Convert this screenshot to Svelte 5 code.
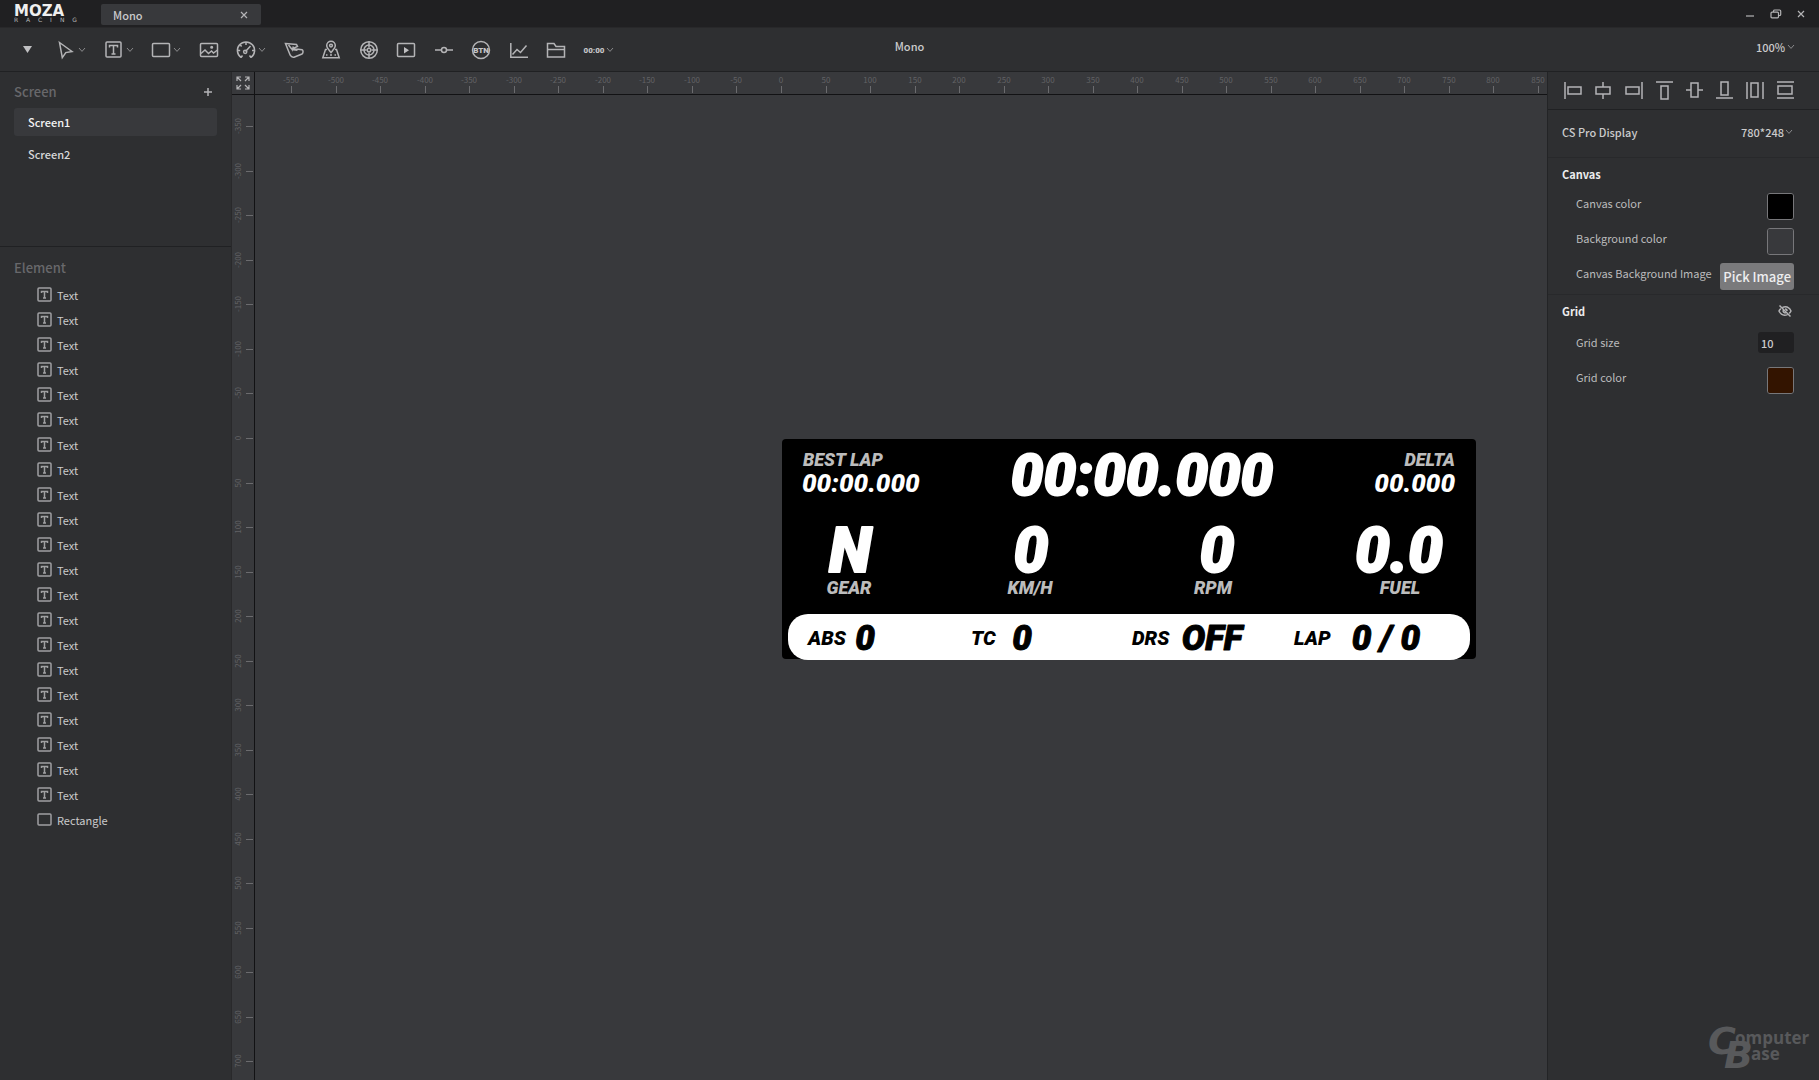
<script>
  const tools = [
    { id: 'cursor', label: 'Select', menu: true },
    { id: 'text', label: 'Text', menu: true },
    { id: 'rect', label: 'Shape', menu: true },
    { id: 'image', label: 'Image' },
    { id: 'gauge', label: 'Gauge', menu: true },
    { id: 'needle', label: 'Pointer' },
    { id: 'map', label: 'Track map' },
    { id: 'radar', label: 'Radar' },
    { id: 'play', label: 'Video' },
    { id: 'slider', label: 'Slider' },
    { id: 'btn', label: 'Button' },
    { id: 'chart', label: 'Chart' },
    { id: 'folder', label: 'Folder' },
    { id: 'time', label: 'Timer', menu: true }
  ];

  const aligns = [
    { label: 'Align left', d: 'M1 1v17 M4 6h13v7h-13z' },
    { label: 'Align center', d: 'M9 1v5 M9 13v5 M2 6h14v7h-14z' },
    { label: 'Align right', d: 'M17 1v17 M1 6h13v7h-13z' },
    { label: 'Align top', d: 'M1 1h17 M6 5h7v13h-7z' },
    { label: 'Align middle', d: 'M1 9h5 M13 9h5 M6 2h7v14h-7z' },
    { label: 'Align bottom', d: 'M1 17h17 M6 1h7v13h-7z' },
    { label: 'Distribute horizontally', d: 'M1 1v17 M17 1v17 M5 2h7v14h-7z' },
    { label: 'Distribute vertically', d: 'M1 1h17 M1 17h17 M2 5h14v8h-14z' }
  ];

  const screens = ['Screen1', 'Screen2'];
  const elements = [...Array(21).fill('Text'), 'Rectangle'];

  // ruler marks: one every 50 units at the current zoom, as far as the rulers reach
  const unit = 0.8905;
  const originX = 526;
  const originY = 343;
  let topWidth = $state(0);
  let sideHeight = $state(0);
  function marks(from, origin, length) {
    const out = [];
    for (let v = from; origin + v * unit < length - 8; v += 50) {
      out.push({ v, at: Math.round(origin + v * unit) });
    }
    return out;
  }
  const across = $derived(marks(-550, originX, topWidth));
  const down = $derived(marks(-350, originY, sideHeight));

  const items = [
    { t: 'BEST LAP', x: 21, y: 27, c: 'caption' },
    { t: '00:00.000', x: 20, y: 53, c: 'small' },
    { t: '00:00.000', x: 360, y: 56, c: 'big mid' },
    { t: 'DELTA', x: 673, y: 27, c: 'caption end' },
    { t: '00.000', x: 673, y: 53, c: 'small end' },
    { t: 'N', x: 68, y: 133, c: 'huge mid' },
    { t: 'GEAR', x: 67, y: 155, c: 'caption mid' },
    { t: '0', x: 249, y: 133, c: 'huge mid' },
    { t: 'KM/H', x: 248, y: 155, c: 'caption mid' },
    { t: '0', x: 435, y: 133, c: 'huge mid' },
    { t: 'RPM', x: 431, y: 155, c: 'caption mid' },
    { t: '0.0', x: 617, y: 133, c: 'huge mid' },
    { t: 'FUEL', x: 618, y: 155, c: 'caption mid' },
    { t: 'ABS', x: 26, y: 206, c: 'tag' },
    { t: '0', x: 83, y: 211, c: 'value mid' },
    { t: 'TC', x: 189, y: 206, c: 'tag' },
    { t: '0', x: 240, y: 211, c: 'value mid' },
    { t: 'DRS', x: 350, y: 206, c: 'tag' },
    { t: 'OFF', x: 430, y: 211, c: 'value mid' },
    { t: 'LAP', x: 512, y: 206, c: 'tag' },
    { t: '0 / 0', x: 604, y: 211, c: 'value mid' }
  ];
</script>

{#snippet chevron()}
  <svg class="chev" width="8" height="6" viewBox="0 0 8 6" aria-hidden="true"><path d="M1 1l3 3.4L7 1" /></svg>
{/snippet}

{#snippet glyph(id)}
  <svg width="20" height="20" viewBox="0 0 20 20" aria-hidden="true">
    {#if id === 'cursor'}
      <path d="M3.5 2.5l12.5 9-6.2 1.1-3.5 5z" />
    {:else if id === 'text'}
      <rect x="2" y="2" width="15" height="15" rx="1" /><path d="M5.500 7.500V5.500h8v2M9.500 5.500v8.500M7.500 14h4" />
    {:else if id === 'rect'}
      <rect x="1.5" y="3.5" width="17" height="13" rx="1" />
    {:else if id === 'image'}
      <rect x="1.5" y="3.5" width="17" height="13" rx="1" />
      <path d="M2 13.5l4-3.5 3.5 3.5 3-2.5 2 2 4-3" /><circle cx="12.7" cy="7.2" r="0.800" />
    {:else if id === 'gauge'}
      <path d="M5 17.5a8.6 8.6 0 1 1 10 0M9.5 11.5l5-5.5M10 2v3M4 4.5l1.6 2M1.5 10.5h2.7M16 10.5h2.5M5 17.5l1.5-2M15 17.5l-1.5-2" />
      <circle cx="9.2" cy="11.8" r="1.6" />
    {:else if id === 'needle'}
      <path d="M1.5 3.5L12.5 4.5l1 2L9 8.5l9 1.2c1.5.8 1.3 3.5 0 4.3l-8 3.2c-2 .4-3-.6-3.8-2z M4.5 5l4 5 .8-3.5M7.5 9.5l6 .8" />
    {:else if id === 'map'}
      <path d="M10 12.5c-2.5-3-4.3-4.7-4.3-7a4.3 4.3 0 0 1 8.6 0c0 2.3-1.8 4-4.3 7z" />
      <circle cx="10" cy="5.6" r="1.4" />
      <path d="M6 9.5H4.5L1.8 17.8h16.4L15.5 9.5H14M5 15h1.5M9 15h2M13.500 15h1.500" />
    {:else if id === 'radar'}
      <circle cx="10" cy="10" r="8.3" /><circle cx="10" cy="10" r="5" /><circle cx="10" cy="10" r="1.800" />
      <path d="M10 1.500v6M10 12.500v6M1.500 10h6M12.500 10h6" />
    {:else if id === 'play'}
      <rect x="1.500" y="3.500" width="17" height="13" rx="1" /><path class="fill" d="M8 7l5 3.200-5 3.200z" />
    {:else if id === 'slider'}
      <path d="M1 10h6.500M12.500 10H19" /><circle cx="10" cy="10" r="2.500" />
    {:else if id === 'btn'}
      <circle cx="10" cy="10" r="8.500" /><text x="10" y="13" class="mark">BTN</text>
    {:else if id === 'chart'}
      <path d="M1.800 3v14.200H19M3.500 14.500l4.500-5 3.500 3 6-7" />
    {:else if id === 'folder'}
      <path d="M1.500 17V3.500h6.500l2 3h8.500V17zM1.500 9.500h17" />
    {:else if id === 'time'}
      <text x="10" y="13" class="mark">00:00</text>
    {/if}
  </svg>
{/snippet}

<div class="app">
  <header class="titlebar">
    <div class="logo"><span class="moza">MOZA</span><span class="racing">RACING</span></div>
    <div class="tab">
      <span>Mono</span>
      <button aria-label="Close tab"><svg width="8" height="8" viewBox="0 0 8 8"><path d="M1 1l6 6M7 1L1 7" /></svg></button>
    </div>
    <div class="window-buttons">
      <button aria-label="Minimize"><svg width="10" height="10" viewBox="0 0 10 10"><path d="M1 7h8" /></svg></button>
      <button aria-label="Restore">
        <svg width="12" height="10" viewBox="0 0 12 10"><path d="M1 4.200q0-1 1-1h5.500q1 0 1 1v3.600q0 1-1 1H2q-1 0-1-1zM3.500 3V2q.2-1 1.200-1h5q1 0 1 1v3.500q0 1-1 1H8.700" /></svg>
      </button>
      <button aria-label="Close"><svg width="8" height="8" viewBox="0 0 8 8"><path d="M1 1l6 6M7 1L1 7" /></svg></button>
    </div>
  </header>

  <div class="toolbar">
    <button class="main-menu" aria-label="Menu"><svg width="9" height="7" viewBox="0 0 9 7"><path class="fill" d="M0 0h9L4.500 7z" /></svg></button>
    <nav class="tools">
      {#each tools as tool}
        <button aria-label={tool.label}>{@render glyph(tool.id)}{#if tool.menu}{@render chevron()}{/if}</button>
      {/each}
    </nav>
    <h1>Mono</h1>
    <label class="zoom">
      <select aria-label="Zoom"><option>100%</option></select>{@render chevron()}
    </label>
  </div>

  <div class="body">
    <aside class="left">
      <section class="screens">
        <div class="head">
          <h2>Screen</h2>
          <button aria-label="Add screen"><svg width="10" height="10" viewBox="0 0 10 10"><path d="M5 1v8M1 5h8" /></svg></button>
        </div>
        {#each screens as name, i}
          <button class="screen" class:active={i === 0}>{name}</button>
        {/each}
      </section>
      <section class="elements">
        <h2>Element</h2>
        <ul>
          {#each elements as name}
            <li>
              <button>
                <svg width="15" height="15" viewBox="0 0 15 15" aria-hidden="true">
                  {#if name === 'Text'}
                    <rect x="1" y="1" width="13" height="13" rx="1" /><path d="M4.500 6V4.500h6V6M7.500 4.500v6.500M6 11h3" />
                  {:else}
                    <rect x="1" y="2" width="13" height="11" rx="1" />
                  {/if}
                </svg>
                {name}
              </button>
            </li>
          {/each}
        </ul>
      </section>
    </aside>

    <main class="stage">
      <button class="corner" aria-label="Fit to view">
        <svg width="14" height="14" viewBox="0 0 14 14"><path d="M1 5V1h4M1 1l4 4M9 1h4v4M13 1L9 5M1 9v4h4M1 13l4-4M13 9v4H9M13 13L9 9" /></svg>
      </button>
      <div class="ruler top" bind:clientWidth={topWidth}>
        <svg width="100%" height="22">
          {#each across as m}
            <path d="M{m.at}.5 14v7" /><text x={m.at} y="11">{m.v}</text>
          {/each}
        </svg>
      </div>
      <div class="ruler side" bind:clientHeight={sideHeight}>
        <svg width="22" height="100%">
          {#each down as m}
            <path d="M14 {m.at}.5h7" /><text transform="translate(9 {m.at}) rotate(-90)">{m.v}</text>
          {/each}
        </svg>
      </div>
      <div class="canvas">
        <svg class="display" width="694" height="221" viewBox="0 0 694 221">
          <rect class="screen-bg" width="694" height="220" rx="4" />
          <rect class="strip" x="6" y="175" width="682" height="46" rx="20" />
          {#each items as it}
            <text class={it.c} x={it.x} y={it.y}>{it.t}</text>
          {/each}
        </svg>
      </div>
    </main>

    <aside class="right">
      <div class="aligns">
        {#each aligns as a}
          <button aria-label={a.label}><svg width="19" height="19" viewBox="0 0 19 19"><path d={a.d} /></svg></button>
        {/each}
      </div>
      <div class="device">
        <label for="size">CS Pro Display</label>
        <span class="pick"><select id="size"><option>780*248</option></select>{@render chevron()}</span>
      </div>
      <section class="group">
        <h3>Canvas</h3>
        <div class="row"><label for="canvas-color">Canvas color</label><input id="canvas-color" type="color" value="#000000" /></div>
        <div class="row"><label for="bg-color">Background color</label><input id="bg-color" type="color" value="#38393c" /></div>
        <div class="row"><label for="bg-image">Canvas Background Image</label><button id="bg-image" class="pick-image">Pick Image</button></div>
      </section>
      <section class="group">
        <div class="group-head">
          <h3>Grid</h3>
          <button aria-label="Show grid">
            <svg width="14" height="14" viewBox="0 0 14 14"><path d="M4.500 3.400C8.500 1.900 11.500 4 13 7c-.5 1-1 1.700-1.800 2.400M9.500 10.600C5.500 12.100 2.500 10 1 7c.5-1 1-1.700 1.800-2.400M5.200 6.300a2 2 0 0 0 2.500 2.500M7 5a2 2 0 0 1 2 2M1.500 1.500l11 11" /></svg>
          </button>
        </div>
        <div class="row"><label for="grid-size">Grid size</label><input id="grid-size" type="text" value="10" /></div>
        <div class="row"><label for="grid-color">Grid color</label><input id="grid-color" type="color" value="#331400" /></div>
      </section>
      <div class="watermark" aria-label="ComputerBase">
        <span class="c">C</span><span class="omputer">omputer</span><span class="b">B</span><span class="ase">ase</span>
      </div>
    </aside>
  </div>
</div>

<style>
  :global(body) {
    margin: 0;
    background: #2e2f31;
  }
  .app {
    display: flex;
    flex-direction: column;
    height: 100vh;
    overflow: hidden;
    color: #cbcbcc;
    background: #2e2f31;
    font-family: 'Noto Sans CJK SC', 'Noto Sans', sans-serif;
    font-size: 11px;
    font-weight: 500;
    line-height: 20px;
  }
  button,
  select,
  input {
    margin: 0;
    padding: 0;
    border: 0;
    background: none;
    color: inherit;
    font: inherit;
  }
  select {
    appearance: none;
  }
  button {
    display: flex;
    align-items: center;
  }
  svg {
    display: block;
    fill: none;
    stroke: #b4b4b6;
    stroke-width: 1.5;
    flex: none;
  }
  svg text {
    stroke: none;
  }
  .fill {
    fill: #c0c0c2;
    stroke: none;
  }
  h1,
  h2,
  h3 {
    margin: 0;
    font-size: 11px;
    font-weight: 500;
  }
  h2 {
    color: #68686b;
    font-size: 13px;
  }
  h3 {
    color: #ececed;
    font-weight: 700;
  }
  .chev {
    stroke: #8a8a8c;
    stroke-width: 1;
  }

  .titlebar {
    display: flex;
    flex: none;
    height: 28px;
    background: #202022;
    border-bottom: 1px solid #28282a;
    box-sizing: border-box;
  }
  .logo {
    display: flex;
    flex-direction: column;
    width: 87px;
    padding: 5px 0 0 14px;
    color: #efefef;
    font-family: 'DejaVu Sans', sans-serif;
  }
  .moza {
    font-size: 15px;
    font-weight: 700;
    line-height: 12px;
  }
  .racing {
    font-size: 6px;
    line-height: 6px;
    letter-spacing: 8px;
    color: #b8b8ba;
  }
  .tab {
    display: flex;
    align-items: center;
    justify-content: space-between;
    width: 135px;
    height: 21px;
    margin-top: 4px;
    padding: 0 13px 0 12px;
    border-radius: 2px;
    background: #38393c;
  }
  .window-buttons {
    display: flex;
    align-items: center;
    gap: 15px;
    margin-left: auto;
    padding-right: 14px;
  }
  .window-buttons svg,
  .tab svg {
    stroke-width: 1.2;
  }

  .toolbar {
    position: relative;
    display: flex;
    flex: none;
    align-items: center;
    height: 44px;
    padding: 0 24px 0 23px;
    border-bottom: 1px solid #202123;
    box-sizing: border-box;
  }
  .main-menu {
    width: 33px;
  }
  .tools {
    display: flex;
    justify-content: space-between;
    width: 558px;
  }
  .tools button {
    gap: 2px;
  }
  .tools svg {
    overflow: visible;
  }
  .mark {
    fill: #c4c4c6;
    font-family: 'Roboto', sans-serif;
    font-size: 8px;
    font-weight: 900;
    text-anchor: middle;
  }
  .toolbar h1 {
    position: absolute;
    inset: 8px 0 auto;
    text-align: center;
    pointer-events: none;
  }
  .zoom {
    display: flex;
    align-items: center;
    gap: 1px;
    margin: 0 0 6px auto;
  }

  .body {
    display: flex;
    flex: 1;
    min-height: 0;
  }
  .left {
    display: flex;
    flex-direction: column;
    flex: none;
    width: 232px;
    border-right: 1px solid #29292b;
    box-sizing: border-box;
  }
  .screens {
    display: flex;
    flex-direction: column;
    gap: 4px;
    height: 175px;
    padding: 10px 14px 0;
    border-bottom: 1px solid #202123;
    box-sizing: border-box;
  }
  .head {
    display: flex;
    justify-content: space-between;
    margin-bottom: 2px;
    padding-right: 4px;
  }
  .screen {
    height: 28px;
    padding-left: 14px;
    border-radius: 3px;
    color: #d8d8d9;
  }
  .active {
    background: #38393c;
    color: #f4f4f4;
  }
  .elements {
    padding: 11px 14px 0;
  }
  ul {
    margin: 4px 0 0;
    padding: 0 0 0 23px;
    list-style: none;
  }
  li button {
    gap: 5px;
    height: 25px;
    font-weight: 400;
  }
  li svg {
    stroke: #a0a0a2;
  }

  .stage {
    display: grid;
    grid-template-columns: 23px 1fr;
    grid-template-rows: 23px 1fr;
    flex: 1;
    min-width: 0;
    background: #38393c;
  }
  .corner {
    justify-content: center;
    border-right: 1px solid #121214;
    border-bottom: 1px solid #121214;
    background: #38393c;
  }
  .corner svg {
    stroke-width: 1.2;
  }
  .ruler {
    overflow: hidden;
    min-width: 0;
    min-height: 0;
  }
  .ruler path {
    stroke: #6b6b6e;
    stroke-width: 1;
  }
  .ruler text {
    fill: #626265;
    font-size: 8px;
    font-weight: 400;
    text-anchor: middle;
  }
  .top {
    border-bottom: 1px solid #121214;
  }
  .side {
    border-right: 1px solid #121214;
  }
  .canvas {
    position: relative;
    overflow: hidden;
  }
  .display {
    position: absolute;
    left: 527px;
    top: 344px;
    stroke: none;
    fill: #fff;
    font-family: 'Roboto', sans-serif;
    font-style: italic;
    font-weight: 900;
  }
  .screen-bg {
    fill: #000;
  }
  .strip {
    fill: #fff;
  }
  .display .caption {
    fill: #bcbcbc;
    font-size: 18px;
  }
  .display .small {
    font-size: 26px;
  }
  .display .big,
  .display .huge {
    stroke: #fff;
    stroke-width: 2;
    stroke-linejoin: round;
  }
  .display .big {
    font-size: 58px;
  }
  .display .huge {
    font-size: 62px;
  }
  .display .tag {
    fill: #000;
    font-size: 20px;
  }
  .display .value {
    fill: #000;
    stroke: #000;
    stroke-width: 1;
    stroke-linejoin: round;
    font-size: 35px;
  }
  .mid {
    text-anchor: middle;
  }
  .end {
    text-anchor: end;
  }

  .right {
    position: relative;
    flex: none;
    width: 272px;
    border-left: 1px solid #232426;
    box-sizing: border-box;
  }
  .aligns {
    display: flex;
    align-items: center;
    justify-content: space-between;
    height: 38px;
    padding: 0 24px 0 16px;
    border-bottom: 1px solid #202123;
    box-sizing: border-box;
  }
  .device {
    display: flex;
    align-items: center;
    justify-content: space-between;
    height: 48px;
    padding: 0 26px 4px 14px;
    border-bottom: 1px solid #28292b;
    box-sizing: border-box;
  }
  .pick {
    display: flex;
    align-items: center;
    gap: 1px;
  }
  .group {
    padding: 6px 25px 1px 14px;
    border-bottom: 1px solid #28292b;
  }
  .group + .group {
    border: 0;
  }
  .group-head {
    display: flex;
    align-items: center;
    justify-content: space-between;
    padding-right: 2px;
  }
  h3 + .row {
    margin-top: 4px;
  }
  .group-head + .row {
    margin-top: 6px;
  }
  .row {
    display: flex;
    justify-content: space-between;
    height: 35px;
    padding: 5px 0 0 14px;
    box-sizing: border-box;
  }
  .row label {
    color: #bcbcbd;
    font-weight: 400;
    white-space: nowrap;
  }
  input[type='color'] {
    width: 27px;
    height: 27px;
    border: 1px solid #77777a;
    border-radius: 3px;
    overflow: hidden;
    appearance: none;
    box-sizing: border-box;
  }
  input[type='color']::-webkit-color-swatch-wrapper {
    padding: 0;
  }
  input[type='color']::-webkit-color-swatch {
    border: 0;
  }
  input[type='text'] {
    width: 36px;
    height: 21px;
    padding: 0 3px;
    border-radius: 3px;
    background: #202022;
    box-sizing: border-box;
  }
  .pick-image {
    height: 27px;
    padding: 0 3px;
    border-radius: 3px;
    background: #7a7a7c;
    color: #eeeeef;
    font-size: 13px;
    white-space: nowrap;
  }
  .watermark {
    position: absolute;
    right: 9px;
    bottom: 8px;
    width: 102px;
    height: 48px;
    color: #58595b;
    font-family: 'Open Sans', sans-serif;
    font-weight: 700;
  }
  .watermark span {
    position: absolute;
  }
  .c,
  .b {
    font-style: italic;
    font-weight: 700;
    font-family: 'DejaVu Sans', sans-serif;
    font-size: 38px;
    line-height: 38px;
  }
  .c {
    left: 0;
    top: -2px;
  }
  .b {
    left: 16px;
    top: 12px;
  }
  .omputer,
  .ase {
    font-size: 17px;
    line-height: 18px;
  }
  .omputer {
    left: 27px;
    top: 5px;
  }
  .ase {
    left: 43px;
    top: 21px;
  }
</style>
